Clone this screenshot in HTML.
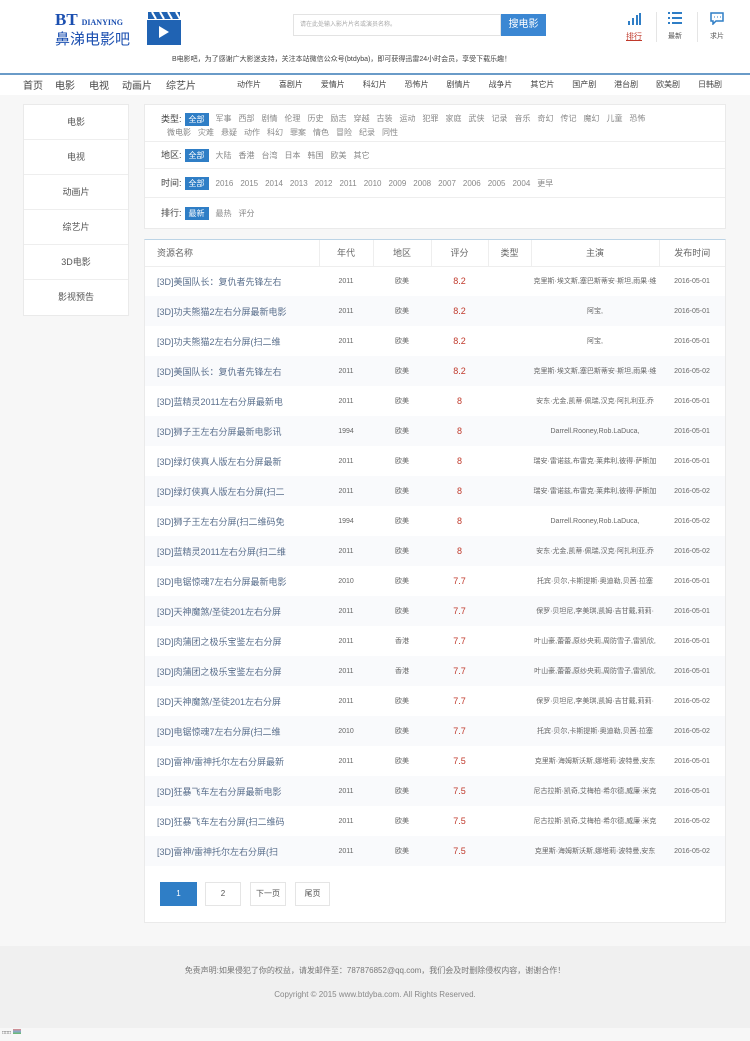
<!DOCTYPE html>
<html><head><meta charset="utf-8"><style>
*{margin:0;padding:0;box-sizing:border-box}
body{width:750px;height:1041px;background:#f7f7f7;font-family:"Liberation Sans","Noto Sans CJK SC",sans-serif;color:#555;position:relative;overflow:hidden}
.hdr{position:absolute;left:0;top:0;width:750px;height:73px;background:#fff}
.hdr2{position:absolute;left:0;top:73px;width:750px;height:22px;background:#fff;border-top:2px solid #6a9bc8}
.a{position:absolute;white-space:nowrap}
.box{position:absolute;background:#fff;border:1px solid #eaeaea}
.side div{height:35px;line-height:35px;text-align:center;font-size:9px;color:#555;border-bottom:1px solid #eee}
.fr{position:absolute;left:0;width:580px;border-bottom:1px solid #eee;font-size:8px;color:#888}
.fr span{display:inline-block;margin-right:7px;line-height:12px;vertical-align:middle}
.fr b{font-weight:normal;font-size:9px;color:#444;margin-right:3px;vertical-align:middle}
.fr span.on{background:#2f7ec6;color:#fff;padding:0 4px;line-height:13px}
table{border-collapse:collapse;width:580px;font-size:7px;color:#666}
td,th{height:30px;text-align:center;font-weight:normal}
th{height:26px;font-size:9px;color:#666;border-right:1px solid #eee;border-bottom:1px solid #eee}
tr:nth-child(odd) td{background:#f9fafc}
td.n{text-align:left;padding-left:12px;font-size:9px;color:#5a6f8c}
td.s{color:#c0392b;font-size:9px}
.pg{position:absolute;top:882px;height:24px;border:1px solid #e5e5e5;background:#fff;font-size:8px;text-align:center;line-height:22px;color:#555}
.nav{position:absolute;top:77px;font-size:10px;color:#444}
.sub{position:absolute;left:237px;top:79px;width:485px;display:flex;justify-content:space-between;font-size:8px;color:#444}
</style></head><body>
<div class="hdr"></div>
<div class="a" style="left:55px;top:10px;font-family:'Liberation Serif',serif;font-weight:bold;font-size:17px;color:#1b4fb0">BT <span style="font-size:8px">DIANYING</span></div>
<div class="a" style="left:55px;top:28px;font-size:15px;color:#1b4fb0">鼻涕电影吧</div>
<svg class="a" style="left:146px;top:10px" width="36" height="36"><rect x="1" y="10" width="34" height="25" fill="#2063b3"/><path d="M2 2h32v7H2z" fill="#2063b3"/><path d="M6 2l4 7M14 2l4 7M22 2l4 7M30 2l4 7" stroke="#fff" stroke-width="2"/><path d="M13 16l10 6-10 6z" fill="#fff"/></svg>
<div class="a" style="left:293px;top:14px;width:208px;height:22px;border:1px solid #e3e3e3;font-size:6px;color:#aaa;line-height:20px;padding-left:6px">请在此处输入影片片名或演员名称。</div>
<div class="a" style="left:501px;top:14px;width:45px;height:22px;background:#3b87d3;color:#fff;font-size:10px;line-height:22px;text-align:center">搜电影</div>
<svg class="a" style="left:627px;top:13px" width="14" height="12"><rect x="1" y="8" width="2" height="4" fill="#2f7ec6"/><rect x="5" y="5" width="2" height="7" fill="#2f7ec6"/><rect x="9" y="2" width="2" height="10" fill="#2f7ec6"/><rect x="12" y="0" width="2" height="12" fill="#2f7ec6"/></svg>
<div class="a" style="left:626px;top:31px;font-size:8px;color:#c0392b;text-decoration:underline">排行</div>
<div class="a" style="left:656px;top:12px;width:1px;height:30px;background:#e5e5e5"></div>
<svg class="a" style="left:668px;top:12px" width="14" height="13"><path d="M0 1h2M4 1h10M0 6h2M4 6h10M0 11h2M4 11h10" stroke="#2f7ec6" stroke-width="2"/></svg>
<div class="a" style="left:668px;top:31px;font-size:7px;color:#555">最新</div>
<div class="a" style="left:697px;top:12px;width:1px;height:30px;background:#e5e5e5"></div>
<svg class="a" style="left:710px;top:12px" width="14" height="13"><path d="M1 1h12v8H6l-3 3V9H1z" fill="none" stroke="#2f7ec6" stroke-width="1.5"/><path d="M4 5h1M7 5h1M10 5h1" stroke="#2f7ec6"/></svg>
<div class="a" style="left:710px;top:31px;font-size:7px;color:#555">求片</div>
<div class="a" style="left:172px;top:54px;font-size:7px;color:#444">B电影吧，为了感谢广大影迷支持，关注本站微信公众号(btdyba)，即可获得迅雷24小时会员，享受下载乐趣！</div>
<div class="hdr2"></div>
<div class="nav" style="left:23px">首页</div><div class="nav" style="left:55px">电影</div><div class="nav" style="left:89px">电视</div><div class="nav" style="left:122px">动画片</div><div class="nav" style="left:166px">综艺片</div>
<div class="sub"><span>动作片</span><span>喜剧片</span><span>爱情片</span><span>科幻片</span><span>恐怖片</span><span>剧情片</span><span>战争片</span><span>其它片</span><span>国产剧</span><span>港台剧</span><span>欧美剧</span><span>日韩剧</span></div>

<div class="box side" style="left:23px;top:104px;width:106px;height:212px">
<div>电影</div><div>电视</div><div>动画片</div><div>综艺片</div><div>3D电影</div><div style="border:0">影视预告</div></div>

<div class="box" style="left:144px;top:104px;width:582px;height:125px">
<div class="fr" style="top:0;height:37px;padding:7px 0 0 16px;line-height:14px"><b>类型:</b><span class="on">全部</span><span>军事</span><span>西部</span><span>剧情</span><span>伦理</span><span>历史</span><span>励志</span><span>穿越</span><span>古装</span><span>运动</span><span>犯罪</span><span>家庭</span><span>武侠</span><span>记录</span><span>音乐</span><span>奇幻</span><span>传记</span><span>魔幻</span><span>儿童</span><span>恐怖</span><br><span style="margin-left:6px">微电影</span><span>灾难</span><span>悬疑</span><span>动作</span><span>科幻</span><span>罪案</span><span>情色</span><span>冒险</span><span>纪录</span><span>同性</span></div>
<div class="fr" style="top:37px;height:27px;padding-left:16px;line-height:27px"><b>地区:</b><span class="on">全部</span><span>大陆</span><span>香港</span><span>台湾</span><span>日本</span><span>韩国</span><span>欧美</span><span>其它</span></div>
<div class="fr" style="top:64px;height:29px;padding-left:16px;line-height:29px"><b>时间:</b><span class="on">全部</span><span>2016</span><span>2015</span><span>2014</span><span>2013</span><span>2012</span><span>2011</span><span>2010</span><span>2009</span><span>2008</span><span>2007</span><span>2006</span><span>2005</span><span>2004</span><span>更早</span></div>
<div class="fr" style="top:93px;height:31px;padding-left:16px;line-height:31px;border:0"><b>排行:</b><span class="on">最新</span><span>最热</span><span>评分</span></div>
</div>

<div class="box" style="left:144px;top:239px;width:582px;height:684px;border-top:1px solid #bcd4e6">
<table>
<tr><th style="width:174px;text-align:left;padding-left:12px">资源名称</th><th style="width:54px">年代</th><th style="width:58px">地区</th><th style="width:57px">评分</th><th style="width:43px">类型</th><th style="width:128px">主演</th><th style="border-right:0">发布时间</th></tr>
<tr><td class="n">[3D]美国队长：复仇者先锋左右</td><td>2011</td><td>欧美</td><td class="s">8.2</td><td></td><td>克里斯·埃文斯,塞巴斯蒂安·斯坦,雨果·维</td><td>2016-05-01</td></tr>
<tr><td class="n">[3D]功夫熊猫2左右分屏最新电影</td><td>2011</td><td>欧美</td><td class="s">8.2</td><td></td><td>阿宝,</td><td>2016-05-01</td></tr>
<tr><td class="n">[3D]功夫熊猫2左右分屏(扫二维</td><td>2011</td><td>欧美</td><td class="s">8.2</td><td></td><td>阿宝,</td><td>2016-05-01</td></tr>
<tr><td class="n">[3D]美国队长：复仇者先锋左右</td><td>2011</td><td>欧美</td><td class="s">8.2</td><td></td><td>克里斯·埃文斯,塞巴斯蒂安·斯坦,雨果·维</td><td>2016-05-02</td></tr>
<tr><td class="n">[3D]蓝精灵2011左右分屏最新电</td><td>2011</td><td>欧美</td><td class="s">8</td><td></td><td>安东·尤金,凯蒂·佩瑞,汉克·阿扎利亚,乔</td><td>2016-05-01</td></tr>
<tr><td class="n">[3D]狮子王左右分屏最新电影讯</td><td>1994</td><td>欧美</td><td class="s">8</td><td></td><td>Darrell.Rooney,Rob.LaDuca,</td><td>2016-05-01</td></tr>
<tr><td class="n">[3D]绿灯侠真人版左右分屏最新</td><td>2011</td><td>欧美</td><td class="s">8</td><td></td><td>瑞安·雷诺兹,布雷克·莱弗利,彼得·萨斯加</td><td>2016-05-01</td></tr>
<tr><td class="n">[3D]绿灯侠真人版左右分屏(扫二</td><td>2011</td><td>欧美</td><td class="s">8</td><td></td><td>瑞安·雷诺兹,布雷克·莱弗利,彼得·萨斯加</td><td>2016-05-02</td></tr>
<tr><td class="n">[3D]狮子王左右分屏(扫二维码免</td><td>1994</td><td>欧美</td><td class="s">8</td><td></td><td>Darrell.Rooney,Rob.LaDuca,</td><td>2016-05-02</td></tr>
<tr><td class="n">[3D]蓝精灵2011左右分屏(扫二维</td><td>2011</td><td>欧美</td><td class="s">8</td><td></td><td>安东·尤金,凯蒂·佩瑞,汉克·阿扎利亚,乔</td><td>2016-05-02</td></tr>
<tr><td class="n">[3D]电锯惊魂7左右分屏最新电影</td><td>2010</td><td>欧美</td><td class="s">7.7</td><td></td><td>托宾·贝尔,卡斯提斯·奥迪勒,贝茜·拉塞</td><td>2016-05-01</td></tr>
<tr><td class="n">[3D]天神魔煞/圣徒201左右分屏</td><td>2011</td><td>欧美</td><td class="s">7.7</td><td></td><td>保罗·贝坦尼,李美琪,凯姆·吉甘戴,莉莉·</td><td>2016-05-01</td></tr>
<tr><td class="n">[3D]肉蒲团之极乐宝鉴左右分屏</td><td>2011</td><td>香港</td><td class="s">7.7</td><td></td><td>叶山豪,蕾蕾,原纱央莉,周防雪子,雷凯欣,</td><td>2016-05-01</td></tr>
<tr><td class="n">[3D]肉蒲团之极乐宝鉴左右分屏</td><td>2011</td><td>香港</td><td class="s">7.7</td><td></td><td>叶山豪,蕾蕾,原纱央莉,周防雪子,雷凯欣,</td><td>2016-05-01</td></tr>
<tr><td class="n">[3D]天神魔煞/圣徒201左右分屏</td><td>2011</td><td>欧美</td><td class="s">7.7</td><td></td><td>保罗·贝坦尼,李美琪,凯姆·吉甘戴,莉莉·</td><td>2016-05-02</td></tr>
<tr><td class="n">[3D]电锯惊魂7左右分屏(扫二维</td><td>2010</td><td>欧美</td><td class="s">7.7</td><td></td><td>托宾·贝尔,卡斯提斯·奥迪勒,贝茜·拉塞</td><td>2016-05-02</td></tr>
<tr><td class="n">[3D]雷神/雷神托尔左右分屏最新</td><td>2011</td><td>欧美</td><td class="s">7.5</td><td></td><td>克里斯·海姆斯沃斯,娜塔莉·波特曼,安东</td><td>2016-05-01</td></tr>
<tr><td class="n">[3D]狂暴飞车左右分屏最新电影</td><td>2011</td><td>欧美</td><td class="s">7.5</td><td></td><td>尼古拉斯·凯奇,艾梅柏·希尔德,威廉·米克</td><td>2016-05-01</td></tr>
<tr><td class="n">[3D]狂暴飞车左右分屏(扫二维码</td><td>2011</td><td>欧美</td><td class="s">7.5</td><td></td><td>尼古拉斯·凯奇,艾梅柏·希尔德,威廉·米克</td><td>2016-05-02</td></tr>
<tr><td class="n">[3D]雷神/雷神托尔左右分屏(扫</td><td>2011</td><td>欧美</td><td class="s">7.5</td><td></td><td>克里斯·海姆斯沃斯,娜塔莉·波特曼,安东</td><td>2016-05-02</td></tr>
</table>
</div>
<div class="pg" style="left:160px;width:37px;background:#2f7ec6;border-color:#2f7ec6;color:#fff">1</div>
<div class="pg" style="left:205px;width:36px">2</div>
<div class="pg" style="left:250px;width:36px">下一页</div>
<div class="pg" style="left:295px;width:35px">尾页</div>

<div class="a" style="left:0;top:946px;width:750px;height:82px;background:#f0f0f0"></div>
<div class="a" style="left:0;top:965px;width:750px;text-align:center;font-size:8px;color:#777">免责声明:如果侵犯了你的权益，请发邮件至：787876852@qq.com，我们会及时删除侵权内容，谢谢合作！</div>
<div class="a" style="left:0;top:990px;width:750px;text-align:center;font-size:8px;color:#888">Copyright © 2015 www.btdyba.com. All Rights Reserved.</div>
<div class="a" style="left:2px;top:1030px;font-size:5px;color:#333">□□□</div>
<div class="a" style="left:13px;top:1029px;width:8px;height:5px;background:linear-gradient(#d88,#8ac,#6b6)"></div>
</body></html>
